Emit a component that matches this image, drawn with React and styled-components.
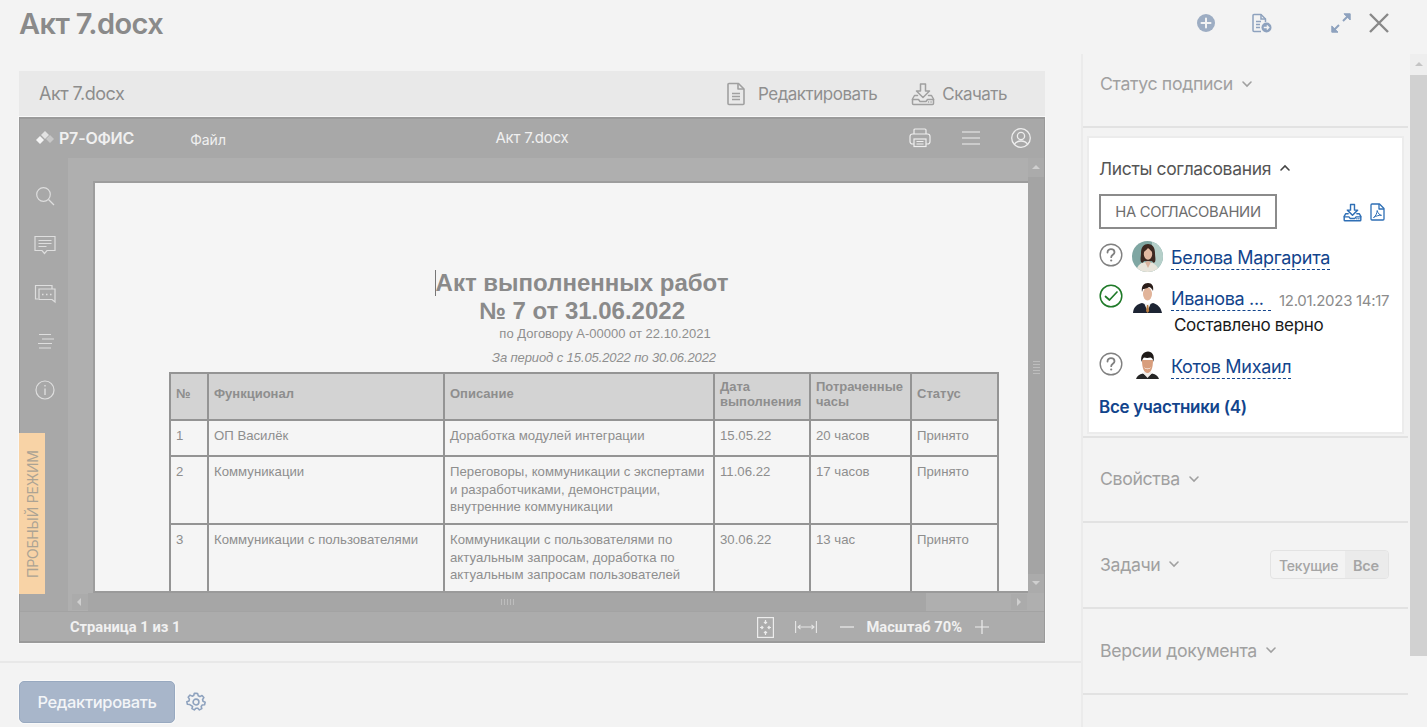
import React from "react";
import styled, { createGlobalStyle } from "styled-components";

const Global = createGlobalStyle`
  html, body { margin: 0; padding: 0; height: 100%; overflow: hidden; background: #f3f3f3; }
  #root { height: 100%; }
  * { box-sizing: border-box; }
  body { font-family: Inter, "Noto Sans", sans-serif; }
`;

const Page = styled.div`
  width: 1427px;
  height: 727px;
  background: #f3f3f3;
  display: grid;
  grid-template-columns: 1081px 346px;
  grid-template-rows: 54px 1fr;
  overflow: hidden;
`;
const TopBar = styled.header`
  grid-column: 1 / 3;
  display: flex;
  align-items: center;
  padding: 0 38px 8px 19px;
`;
const Title = styled.h1`
  margin: 0;
  font-size: 29px;
  font-weight: 600;
  color: #8a8a8a;
  letter-spacing: -0.6px;
  flex: 1;
`;
const TopIcons = styled.div`
  display: flex;
  align-items: center;
`;
const TopIcon = styled.span`
  display: flex;
  margin-left: ${(p) => p.$gap}px;
  color: ${(p) => p.$color};
`;

const Left = styled.main`
  display: flex;
  flex-direction: column;
  min-height: 0;
`;
const Work = styled.div`
  padding: 17px 36px 0 19px;
  height: 609px;
  border-bottom: 2px solid #e8e8e8;
`;
const DocHead = styled.div`
  height: 45px;
  background: #e9e9e9;
  display: flex;
  align-items: center;
  padding: 0 38px 0 20px;
  font-size: 18px;
  color: #8d8d8d;
  letter-spacing: -0.5px;
`;
const DocName = styled.span`
  flex: 1;
`;
const DocAction = styled.span`
  display: flex;
  align-items: center;
  gap: ${(p) => p.$gap}px;
  margin-left: ${(p) => p.$ml}px;
  font-size: 17px;
  color: #8f8f8f;
  letter-spacing: -0.5px;
`;
const Viewer = styled.div`
  position: relative;
  margin-top: 1px;
  height: 526px;
  background: #a8a8a8;
  border: 1px solid #9a9a9a;
  border-width: 2px 1px;
  display: flex;
  flex-direction: column;
  color: #f0f0f0;
  box-shadow: 0 0 0 1px #f8f8f8;
`;
const ViewerBar = styled.div`
  height: 39px;
  flex: none;
  display: grid;
  grid-template-columns: 1fr auto 1fr;
  align-items: center;
  padding: 0 13px 2px 15px;
  font-size: 14.5px;
`;
const BarLeft = styled.div`
  display: flex;
  align-items: center;
`;
const Brand = styled.span`
  margin-left: 4px;
  font-weight: 600;
  font-size: 16px;
  letter-spacing: -0.2px;
`;
const FileMenu = styled.span`
  margin-left: 56px;
  font-size: 14px;
  position: relative;
  top: 2px;
`;
const DocTitle = styled.span`
  font-size: 15px;
  letter-spacing: -0.2px;
  margin-left: -2px;
`;
const BarRight = styled.div`
  display: flex;
  justify-content: flex-end;
  align-items: center;
  gap: 31px;
`;
const ViewerBody = styled.div`
  flex: 1;
  display: flex;
  min-height: 0;
`;
const Rail = styled.div`
  width: 48px;
  flex: none;
  display: flex;
  flex-direction: column;
  align-items: center;
  padding: 28px 0 0 2px;
  gap: 29px;
`;
const Canvas = styled.div`
  flex: 1;
  min-width: 0;
  background: #afafaf;
  display: grid;
  grid-template-columns: minmax(0, 1fr) 16px;
  grid-template-rows: minmax(0, 1fr) 18px;
`;
const Sheet = styled.div`
  margin: 23px 0 0 25px;
  background: #f5f5f5;
  border: 1px solid #9d9d9d;
  border-width: 2px 0 2px 2px;
  border-bottom-color: #9a9a9a;
  overflow: hidden;
  color: #8a8a8a;
  font-family: "Liberation Sans", Arial, sans-serif;
  display: flex;
  flex-direction: column;
  align-items: center;
  padding: 86px 0 0 42px;
`;
const DocHeading = styled.div`
  font-size: 24px;
  line-height: 27.5px;
  font-weight: 700;
  text-align: center;
  color: #8a8a8a;
  position: relative;
  margin-right: 1px;
`;
const Caret = styled.span`
  position: absolute;
  left: -1px;
  top: 1px;
  width: 1.5px;
  height: 26px;
  background: #777;
`;
const SubLine = styled.div`
  font-size: 13px;
  line-height: 16px;
  margin-top: ${(p) => p.$mt}px;
  margin-left: ${(p) => p.$ml}px;
  font-style: ${(p) => (p.$italic ? "italic" : "normal")};
  color: #8f8f8f;
  letter-spacing: ${(p) => (p.$italic ? "-0.1px" : "0")};
`;
const DocTable = styled.table`
  margin-top: 6px;
  margin-left: 3px;
  width: 828px;
  flex: none;
  table-layout: fixed;
  border-collapse: collapse;
  font-size: 13.2px;
  line-height: 17.7px;
  color: #8e8e8e;
`;
const Th = styled.th`
  background: #d3d3d3;
  border: 2px solid #949494;
  padding: 0 5px 6px;
  height: 47px;
  text-align: left;
  font-weight: 700;
  font-size: 13px;
  line-height: 15px;
  color: #8e8e8e;
  vertical-align: middle;
`;
const Td = styled.td`
  border: 2px solid #949494;
  padding: 6px 5px 4px 5px;
  height: ${(p) => p.$h}px;
  vertical-align: top;
`;
const Cell = styled.div`
  white-space: nowrap;
`;
const ScrollV = styled.div`
  display: flex;
  flex-direction: column;
  background: #a4a4a4;
  min-height: 0;
`;
const ScrollBtn = styled.div`
  width: ${(p) => (p.$w ? p.$w + "px" : "100%")};
  height: ${(p) => (p.$h ? p.$h + "px" : "auto")};
  margin-left: ${(p) => p.$ml || 0}px;
  flex: none;
  display: flex;
  align-items: center;
  justify-content: center;
  background: #ababab;
`;
const GripV = styled.div`
  flex: 1;
  display: flex;
  align-items: center;
  justify-content: center;
  padding-bottom: 2px;
`;
const GripLinesV = styled.div`
  width: 7px;
  height: 13px;
  margin-bottom: 14px;
  background: repeating-linear-gradient(180deg, #bdbdbd 0 1px, transparent 1px 3px);
`;
const ScrollH = styled.div`
  grid-column: 1 / 3;
  display: flex;
  align-items: center;
  background: #afafaf;
  padding-left: 4px;
  min-width: 0;
`;
const HTrack = styled.div`
  width: 838px;
  height: 18px;
  flex: none;
  background: #a6a6a6;
  display: flex;
  align-items: center;
  justify-content: center;
`;
const GripLinesH = styled.div`
  width: 13px;
  height: 6px;
  background: repeating-linear-gradient(90deg, #bdbdbd 0 1px, transparent 1px 3px);
`;
const StatusBar = styled.div`
  height: 30px;
  flex: none;
  display: flex;
  align-items: center;
  padding: 1px 55px 0 50px;
  border-top: 1px solid #a3a3a3;
  background: #acacac;
  font-size: 14.7px;
  font-weight: 700;
  font-family: Roboto, Inter, sans-serif;
  color: #f1f1f1;
`;
const StatusText = styled.span`
  flex: 1;
`;
const StatusIcon = styled.span`
  display: flex;
  margin-left: ${(p) => p.$ml}px;
`;
const Zoom = styled.span`
  margin-left: 13px;
  margin-right: 13px;
`;
const TrialTab = styled.div`
  position: absolute;
  left: -1px;
  top: 314px;
  width: 26px;
  height: 161px;
  background: #f8d3a6;
  color: #aca394;
  font-size: 14px;
  display: flex;
  align-items: center;
  justify-content: center;
  writing-mode: vertical-rl;
  transform: rotate(180deg);
  letter-spacing: -0.2px;
  padding-bottom: 2px;
`;

const Footer = styled.div`
  flex: 1;
  display: flex;
  align-items: center;
  gap: 11px;
  padding: 14px 0 0 19px;
`;
const EditButton = styled.button`
  width: 156px;
  height: 42px;
  border: 1px solid #98a9c0;
  border-radius: 5px;
  background: #a8b6ca;
  color: #f3f5f8;
  font: 500 16.5px Inter, sans-serif;
  letter-spacing: -0.35px;
  box-shadow: 0 0 0 1px #f9f9f9;
`;

const Side = styled.aside`
  display: flex;
  min-height: 0;
`;
const SideCol = styled.div`
  flex: 1;
  min-width: 0;
  border-left: 2px solid #ebebeb;
  display: flex;
  flex-direction: column;
  margin-right: 2px;
`;
const Section = styled.section`
  height: ${(p) => p.$h}px;
  flex: none;
  padding: ${(p) => p.$pt ?? 0}px 19px ${(p) => (p.$pt ? 0 : 2)}px 17px;
  display: flex;
  align-items: ${(p) => (p.$top ? "flex-start" : "center")};
  border-bottom: 2px solid #e2e2e2;
`;
const SectionTitle = styled.span`
  flex: 1;
  display: flex;
  align-items: center;
  gap: 8px;
  font-size: 17.7px;
  color: #a0a0a0;
  letter-spacing: -0.35px;
`;
const Segment = styled.div`
  display: flex;
  height: 29px;
  border: 1px solid #e3e3e3;
  border-radius: 4px;
  overflow: hidden;
  font-size: 14px;
  font-weight: 500;
  color: #a5a5a5;
  letter-spacing: -0.2px;
`;
const SegItem = styled.span`
  display: flex;
  align-items: center;
  padding: 2px 0 0 8px;
  width: ${(p) => p.$w}px;
  background: ${(p) => (p.$active ? "#ebebeb" : "transparent")};
  font-weight: ${(p) => (p.$active ? 600 : 500)};
  font-size: ${(p) => (p.$active ? 14.5 : 14)}px;
`;
const CardWrap = styled.div`
  height: 310px;
  flex: none;
  padding: 10px 6px 6px 6px;
  border-bottom: 2px solid #e2e2e2;
`;
const Card = styled.div`
  height: 294px;
  background: #fff;
  box-shadow: 0 0 0 2px #ececec;
  padding: 18px 11px 0 10px;
`;
const CardTitle = styled.div`
  display: flex;
  align-items: center;
  gap: 8px;
  font-size: 17.5px;
  height: 24px;
  color: #555;
  letter-spacing: -0.35px;
`;
const StateRow = styled.div`
  display: flex;
  align-items: center;
  margin-top: 14px;
`;
const StateBadge = styled.div`
  width: 178px;
  height: 35px;
  border: 2px solid #8b8b8b;
  font-size: 14.8px;
  letter-spacing: -0.3px;
  color: #6e6e6e;
  display: flex;
  align-items: center;
  justify-content: center;
`;
const StateIcons = styled.div`
  margin-left: auto;
  margin-right: 6px;
  display: flex;
  align-items: center;
  gap: 8px;
  color: #2f6fb5;
  padding-top: 1px;
`;
const Person = styled.div`
  display: grid;
  grid-template-columns: 25px 31px auto auto;
  grid-auto-rows: min-content;
  justify-content: start;
  column-gap: 8px;
  align-items: start;
  margin-top: ${(p) => p.$mt}px;
  height: ${(p) => p.$h}px;
`;
const StatusMark = styled.span`
  display: flex;
  margin-top: 2px;
`;
const Name = styled.a`
  font-size: 18px;
  line-height: 23px;
  margin-top: 5px;
  color: #12448c;
  letter-spacing: -0.32px;
  border-bottom: 1.5px dashed #12448c;
  white-space: nowrap;
  width: ${(p) => (p.$w ? p.$w + "px" : "auto")};
`;
const When = styled.span`
  font-size: 15px;
  color: #8c8c8c;
  letter-spacing: -0.3px;
  margin-top: 9px;
  white-space: nowrap;
`;
const Comment = styled.div`
  grid-column: 3 / 5;
  grid-row: 2;
  font-size: 17px;
  line-height: 24px;
  margin: 0 0 0 3px;
  color: #1a1a1a;
  letter-spacing: -0.3px;
`;
const AllLink = styled.a`
  display: block;
  margin-top: 13px;
  font-size: 17px;
  font-weight: 600;
  color: #12448c;
  letter-spacing: -0.3px;
`;
const SideScroll = styled.div`
  width: 17px;
  flex: none;
  display: flex;
  flex-direction: column;
`;
const SideBtn = styled.div`
  height: 21px;
  background: #eeeeee;
  display: flex;
  align-items: center;
  justify-content: center;
`;
const SideThumb = styled.div`
  height: 581px;
  background: #d1d1d1;
`;

const Chevron = ({ up, color = "#a0a0a0" }) => (
  <svg width="12" height="8" viewBox="0 0 12 8" fill="none" stroke={color} strokeWidth="1.6" strokeLinecap="round">
    <path d={up ? "M2 6l4-4 4 4" : "M2 2l4 4 4-4"} />
  </svg>
);
const Tri = ({ dir, color = "#cfcfcf" }) => {
  const d = { up: "M1 6l4-4 4 4z", down: "M1 2l4 4 4-4z", left: "M6 1L2 5l4 4z", right: "M3 1l4 4-4 4z" }[dir];
  return (
    <svg width="10" height="10" viewBox="0 0 10 10" fill={color}>
      <path d={d} />
    </svg>
  );
};
const DownloadTray = ({ size = 24, color = "#a0a0a0", w = 1.5 }) => (
  <svg width={size} height={size} viewBox="0 0 24 24" fill="none" stroke={color} strokeWidth={w} strokeLinejoin="round" strokeLinecap="round">
    <path d="M9.5 2h5v7h4L12 15.5 5.500 9h4z" />
    <path d="M6.500 13.500H3.500L1.500 17v4.500a1 1 0 0 0 1 1h19a1 1 0 0 0 1-1V17l-2-3.500h-3" />
    <path d="M1.500 17.500h6l1.500 2h6l1.500-2h6" />
    <path d="M17.500 20h.1M20 20h.1" />
  </svg>
);
const FileLines = () => (
  <svg width="20" height="24" viewBox="0 0 20 24" fill="none" stroke="#a0a0a0" strokeWidth="1.6" strokeLinejoin="round">
    <path d="M3 1.500h9.500L18 7v14.500a1 1 0 0 1-1 1H3a1 1 0 0 1-1-1v-19a1 1 0 0 1 1-1z" />
    <path d="M12 1.500V7h6M6 11.500h8M6 14.500h8M6 17.500h8" />
  </svg>
);
const PlusCircle = () => (
  <svg width="20" height="20" viewBox="0 0 20 20">
    <circle cx="10" cy="10" r="9" fill="#9dadc3" />
    <path d="M10 5.500v9M5.500 10h9" stroke="#f3f3f3" strokeWidth="2" strokeLinecap="round" />
  </svg>
);
const FileGo = () => (
  <svg width="21" height="20" viewBox="0 0 21 20" fill="none" stroke="#8ea2be" strokeWidth="1.5">
    <path d="M10 18.500H3a1 1 0 0 1-1-1v-15a1 1 0 0 1 1-1h7l4.500 4.500v3" strokeLinejoin="round" />
    <path d="M10 1.500V6h4.500M5 8.500h5M5 11.500h4M5 14.500h4" />
    <circle cx="15.500" cy="14.500" r="5" fill="#8ea2be" stroke="none" />
    <path d="M12.800 14.500h5M15.800 12.500l2 2-2 2" stroke="#f3f3f3" strokeWidth="1.300" />
  </svg>
);
const ExpandArrows = () => (
  <svg width="20" height="20" viewBox="0 0 20 20" fill="#8ea2be" stroke="#8ea2be">
    <path d="M12 8l5-5M3 17l5-5" fill="none" strokeWidth="2" />
    <path d="M13 .8h6.200V7z" strokeWidth="1" />
    <path d="M.8 13v6.200H7z" strokeWidth="1" />
  </svg>
);
const CloseX = () => (
  <svg width="20" height="20" viewBox="0 0 20 20" fill="none" stroke="#888" strokeWidth="2.400">
    <path d="M1 1l18 18M19 1L1 19" />
  </svg>
);
const Logo = () => (
  <svg width="20" height="14" viewBox="0 0 20 14">
    <path d="M10 0l4 4-4 4-4-4z" fill="#e2e2e2" />
    <path d="M5 5l4 4-4 4-4-4z" fill="#f4f4f4" />
    <path d="M15 4l4 4-4 4-4-4z" fill="#c8c8c8" />
  </svg>
);
const PrinterIcon = () => (
  <svg width="22" height="20" viewBox="0 0 22 20" fill="none" stroke="#eee" strokeWidth="1.200">
    <path d="M5 6V2a1 1 0 0 1 1-1h10a1 1 0 0 1 1 1v4" />
    <rect x="1" y="6" width="20" height="10" rx="2.500" />
    <rect x="5" y="11" width="12" height="7.500" fill="#a8a8a8" />
    <path d="M7.500 13.500h7M7.500 16h7" />
  </svg>
);
const BurgerIcon = () => (
  <svg width="18" height="14" viewBox="0 0 18 14" stroke="#eee" strokeWidth="1.200">
    <path d="M0 1h18M0 7h18M0 13h18" />
  </svg>
);
const UserCircle = () => (
  <svg width="20" height="20" viewBox="0 0 20 20" fill="none" stroke="#eee" strokeWidth="1.300">
    <circle cx="10" cy="10" r="9.300" />
    <circle cx="10" cy="8" r="3.600" />
    <path d="M3.300 16.500C5 13.500 7.500 13 10 13s5 .5 6.700 3.500" />
  </svg>
);
const RailStroke = { fill: "none", stroke: "#dedede", strokeWidth: 1.200 };
const SearchIcon = () => (
  <svg width="20" height="20" viewBox="0 0 20 20" {...RailStroke}>
    <circle cx="8.500" cy="8.500" r="6.800" />
    <path d="M13.500 13.500l5.500 5.500" />
  </svg>
);
const CommentIcon = () => (
  <svg width="22" height="20" viewBox="0 0 22 20" {...RailStroke}>
    <path d="M1 1.500h20v14H13l-2.500 3-2.500-3H1z" />
    <path d="M4.500 5.500h13M4.500 8.500h13M4.500 11.500h8" />
  </svg>
);
const ChatIcon = () => (
  <svg width="22" height="20" viewBox="0 0 22 20" {...RailStroke}>
    <path d="M4 15H1.500V1.500H18V5" />
    <path d="M5 5h16v13l-3-2.500H5z" />
    <path d="M8 10.500h1.500M12 10.500h1.500M16 10.500h1.500" strokeWidth="1.600" />
  </svg>
);
const AlignIcon = () => (
  <svg width="20" height="18" viewBox="0 0 20 18" {...RailStroke}>
    <path d="M4 1.500h12M7 6h12M3 10.500h14M4 15h12" />
  </svg>
);
const InfoIcon = () => (
  <svg width="20" height="20" viewBox="0 0 20 20" {...RailStroke}>
    <circle cx="10" cy="10" r="9" />
    <path d="M10 8.500V15M10 5v1.500" strokeWidth="1.400" />
  </svg>
);
const Fit = () => (
  <svg width="17" height="21" viewBox="0 0 17 21" fill="none" stroke="#ececec" strokeWidth="1.200">
    <rect x=".6" y=".6" width="15.800" height="19.800" />
    <path d="M8.500 3v3.500M8.500 14.500V18M3 10.500h3M11 10.500h3" />
    <path d="M7 5l1.500 1.500L10 5M7 16l1.500-1.500L10 16M4.500 9l1.500 1.500L4.500 12M12.500 9L11 10.500l1.500 1.500" />
  </svg>
);
const FitWidth = () => (
  <svg width="22" height="14" viewBox="0 0 22 14" fill="none" stroke="#e6e6e6" strokeWidth="1.100">
    <path d="M.6 1v12M21.400 1v12M3 7h16M5.500 4.800L3 7l2.500 2.200M16.500 4.800L19 7l-2.500 2.200" />
  </svg>
);
const Minus = () => (
  <svg width="14" height="2" viewBox="0 0 14 2" stroke="#ececec" strokeWidth="1.200">
    <path d="M0 1h14" />
  </svg>
);
const Plus = () => (
  <svg width="14" height="14" viewBox="0 0 14 14" stroke="#ececec" strokeWidth="1.200">
    <path d="M0 7h14M7 0v14" />
  </svg>
);
const Gear = () => (
  <svg width="20" height="20" viewBox="0 0 24 24" fill="none" stroke="#8ea2be" strokeWidth="1.900" strokeLinejoin="round">
    <path d="M12 2l2 .3.700 2.700 2 .9 2.500-1.300 2.200 2.500-1.500 2.300.5 2.200 2.600 1-.7 3.100-2.800.2-1.300 1.800.8 2.700-2.900 1.500-1.900-2.100-2.300.1-1.900 2-2.900-1.500.8-2.700L4.500 15.500l-2.800-.3L1 12.200l2.600-1 .5-2.200L2.600 6.600l2.200-2.500L7.300 5.400l2-.9L10 2z" transform="translate(0 -.4)" />
    <circle cx="12" cy="12" r="3.500" />
  </svg>
);
const PdfIcon = () => (
  <svg width="15" height="18" viewBox="0 0 15 18" fill="none" stroke="#2f6fb5" strokeWidth="1.300" strokeLinejoin="round">
    <path d="M2 1h7.500L14 5.500V16a1 1 0 0 1-1 1H2a1 1 0 0 1-1-1V2a1 1 0 0 1 1-1z" />
    <path d="M9 1v5h5" />
    <path d="M3.500 14.500c2-1 3.500-4 3.700-7 .8 3 2.300 4.500 4.300 4.800-2.500-.2-5.500.6-8 2.200z" strokeWidth="1" />
  </svg>
);
const Question = () => (
  <svg width="24" height="24" viewBox="0 0 24 24" fill="none" stroke="#808080">
    <circle cx="12" cy="12" r="10.800" strokeWidth="1.400" />
    <path d="M8.500 9.500c0-2.200 1.600-3.300 3.500-3.300s3.500 1.100 3.500 3c0 2.500-3.300 2.500-3.300 5" strokeWidth="1.800" strokeLinecap="round" />
    <circle cx="12.200" cy="17.500" r="1.100" fill="#808080" stroke="none" />
  </svg>
);
const CheckCircle = () => (
  <svg width="24" height="24" viewBox="0 0 24 24" fill="none" stroke="#1f7a28">
    <circle cx="12" cy="12" r="10.800" strokeWidth="1.500" />
    <path d="M6.500 12.500l4 3.500L18 8" strokeWidth="1.700" strokeLinecap="round" strokeLinejoin="round" />
  </svg>
);
const AvatarWoman = () => (
  <svg width="31" height="31" viewBox="0 0 31 31">
    <defs>
      <clipPath id="av1"><circle cx="15.500" cy="15.500" r="15.500" /></clipPath>
    </defs>
    <g clipPath="url(#av1)">
      <rect width="31" height="31" fill="#7fa6a2" />
      <rect x="20" width="11" height="31" fill="#b5cfc9" />
      <path d="M4 31c1-7 5-10 11-10s11 3 12 10z" fill="#e8e4da" />
      <path d="M13 21l3 6 3-6-3-1z" fill="#d9b29d" />
      <path d="M9 12c0-6 3-9 7-9s7 3 7 9c0 4 1 6 0 9-2 2-3-1-3-1h-8s-1 3-3 1c-1-3 0-5 0-9z" fill="#3c2720" />
      <ellipse cx="16" cy="13" rx="4.200" ry="5.800" fill="#e3b9a2" />
      <path d="M11.500 11c2-1 4-3 4.500-5 1 2 3 4 4.500 5 0-5-2-7-4.500-7s-4.500 2-4.500 7z" fill="#3c2720" />
    </g>
  </svg>
);
const AvatarMan = () => (
  <svg width="31" height="31" viewBox="0 0 31 31">
    <path d="M1 31c.5-6 4-9 9-10l5.500 2 5.500-2c4 1 8 4 9 10z" fill="#1d2433" />
    <path d="M12 21l3.500 8 3.500-8-3.500 1z" fill="#f2f2f2" />
    <path d="M15 23l1.200 0 1 6-1.700 2-1.500-2z" fill="#b77b3e" />
    <ellipse cx="15.500" cy="12" rx="4.500" ry="6.500" fill="#e1b49a" />
    <path d="M10 10c-1-6 2-9 6-9s6 3 5 8c-1-2-2-3.500-4-4-2 1.500-5 2-6 2-.5 1-.5 2-1 3z" fill="#2b1e1a" />
  </svg>
);
const AvatarMan2 = () => (
  <svg width="31" height="31" viewBox="0 0 31 31">
    <path d="M4 29c1-3 3-4.500 7-5.500l4.500 3 4.500-3c4 1 6 2.500 7 5.500z" fill="#262626" />
    <path d="M11 23l4.500 5 4.500-5-2-2h-5z" fill="#f1ece8" />
    <path d="M10 10c0 8 2 13 5.500 13S21 18 21 10z" fill="#d89e7d" />
    <path d="M12 17c2 2 5 2 7 0-1 3-6 3-7 0z" fill="#fff" />
    <path d="M9.500 12C8 5 12 1.500 16 1.500S23 5 21.500 12c-.5-3-1.500-4-3-4.500-2 .5-4.500.5-6.500 0-1 1-2 2.500-2.500 4.500z" fill="#1f1a18" />
  </svg>
);

const rows = [
  { h: 36, n: "1", f: ["ОП Василёк"], d: ["Доработка модулей интеграции"], date: "15.05.22", hrs: "20 часов" },
  { h: 68, n: "2", f: ["Коммуникации"], d: ["Переговоры, коммуникации с экспертами", "и разработчиками, демонстрации,", "внутренние коммуникации"], date: "11.06.22", hrs: "17 часов" },
  { h: 72, n: "3", f: ["Коммуникации с пользователями"], d: ["Коммуникации с пользователями по", "актуальным запросам, доработка по", "актуальным запросам пользователей"], date: "30.06.22", hrs: "13 час" },
];

export default function App() {
  return (
    <Page>
      <Global />
      <TopBar>
        <Title>Акт 7.docx</Title>
        <TopIcons>
          <TopIcon $gap={0}><PlusCircle /></TopIcon>
          <TopIcon $gap={35}><FileGo /></TopIcon>
          <TopIcon $gap={59}><ExpandArrows /></TopIcon>
          <TopIcon $gap={18}><CloseX /></TopIcon>
        </TopIcons>
      </TopBar>
      <Left>
        <Work>
          <DocHead>
            <DocName>Акт 7.docx</DocName>
            <DocAction $gap={12} $ml={0}><FileLines />Редактировать</DocAction>
            <DocAction $gap={7} $ml={34}><DownloadTray />Скачать</DocAction>
          </DocHead>
          <Viewer>
            <ViewerBar>
              <BarLeft>
                <Logo />
                <Brand>Р7-ОФИС</Brand>
                <FileMenu>Файл</FileMenu>
              </BarLeft>
              <DocTitle>Акт 7.docx</DocTitle>
              <BarRight>
                <PrinterIcon />
                <BurgerIcon />
                <UserCircle />
              </BarRight>
            </ViewerBar>
            <ViewerBody>
              <Rail>
                <SearchIcon />
                <CommentIcon />
                <ChatIcon />
                <AlignIcon />
                <InfoIcon />
              </Rail>
              <Canvas>
                <Sheet>
                  <DocHeading>
                    <Caret />
                    Акт выполненных работ
                    <br />№ 7 от 31.06.2022
                  </DocHeading>
                  <SubLine $mt={2} $ml={45}>по Договору А-00000 от 22.10.2021</SubLine>
                  <SubLine $mt={8} $ml={43} $italic>За период с 15.05.2022 по 30.06.2022</SubLine>
                  <DocTable>
                    <colgroup>
                      <col width="38" />
                      <col width="236" />
                      <col width="270" />
                      <col width="96" />
                      <col width="101" />
                      <col width="87" />
                    </colgroup>
                    <thead>
                      <tr>
                        <Th>№</Th>
                        <Th>Функционал</Th>
                        <Th>Описание</Th>
                        <Th>Дата выполнения</Th>
                        <Th>Потраченные часы</Th>
                        <Th>Статус</Th>
                      </tr>
                    </thead>
                    <tbody>
                      {rows.map((r) => (
                        <tr key={r.n}>
                          <Td $h={r.h}>{r.n}</Td>
                          <Td $h={r.h}>{r.f.map((t) => <Cell key={t}>{t}</Cell>)}</Td>
                          <Td $h={r.h}>{r.d.map((t) => <Cell key={t}>{t}</Cell>)}</Td>
                          <Td $h={r.h}>{r.date}</Td>
                          <Td $h={r.h}>{r.hrs}</Td>
                          <Td $h={r.h}>Принято</Td>
                        </tr>
                      ))}
                    </tbody>
                  </DocTable>
                </Sheet>
                <ScrollV>
                  <ScrollBtn $h={19}><Tri dir="up" /></ScrollBtn>
                  <GripV><GripLinesV /></GripV>
                  <ScrollBtn $h={19}><Tri dir="down" /></ScrollBtn>
                </ScrollV>
                <ScrollH>
                  <ScrollBtn $w={16} $h={16}><Tri dir="left" /></ScrollBtn>
                  <HTrack><GripLinesH /></HTrack>
                  <ScrollBtn $w={16} $h={16} $ml={85}><Tri dir="right" /></ScrollBtn>
                </ScrollH>
              </Canvas>
            </ViewerBody>
            <StatusBar>
              <StatusText>Страница 1 из 1</StatusText>
              <StatusIcon $ml={0}><Fit /></StatusIcon>
              <StatusIcon $ml={21}><FitWidth /></StatusIcon>
              <StatusIcon $ml={23}><Minus /></StatusIcon>
              <Zoom>Масштаб 70%</Zoom>
              <StatusIcon $ml={0}><Plus /></StatusIcon>
            </StatusBar>
            <TrialTab>ПРОБНЫЙ РЕЖИМ</TrialTab>
          </Viewer>
        </Work>
        <Footer>
          <EditButton>Редактировать</EditButton>
          <Gear />
        </Footer>
      </Left>
      <Side>
        <SideCol>
          <Section $h={74} $top $pt={19}>
            <SectionTitle>Статус подписи <Chevron /></SectionTitle>
          </Section>
          <CardWrap>
            <Card>
              <CardTitle>Листы согласования <Chevron up color="#444" /></CardTitle>
              <StateRow>
                <StateBadge>НА СОГЛАСОВАНИИ</StateBadge>
                <StateIcons>
                  <DownloadTray size={19} color="#2f6fb5" w={1.800} />
                  <PdfIcon />
                </StateIcons>
              </StateRow>
              <Person $mt={12} $h={38}>
                <StatusMark><Question /></StatusMark>
                <AvatarWoman />
                <Name>Белова Маргарита</Name>
              </Person>
              <Person $mt={3} $h={58}>
                <StatusMark><CheckCircle /></StatusMark>
                <AvatarMan />
                <Name $w={100}>Иванова ...</Name>
                <When>12.01.2023 14:17</When>
                <Comment>Составлено верно</Comment>
              </Person>
              <Person $mt={10} $h={34}>
                <StatusMark><Question /></StatusMark>
                <AvatarMan2 />
                <Name>Котов Михаил</Name>
              </Person>
              <AllLink>Все участники (4)</AllLink>
            </Card>
          </CardWrap>
          <Section $h={85}>
            <SectionTitle>Свойства <Chevron /></SectionTitle>
          </Section>
          <Section $h={86}>
            <SectionTitle>Задачи <Chevron /></SectionTitle>
            <Segment>
              <SegItem $w={74}>Текущие</SegItem>
              <SegItem $w={43} $active>Все</SegItem>
            </Segment>
          </Section>
          <Section $h={86}>
            <SectionTitle>Версии документа <Chevron /></SectionTitle>
          </Section>
        </SideCol>
        <SideScroll>
          <SideBtn><Tri dir="up" color="#c4c4c4" /></SideBtn>
          <SideThumb />
        </SideScroll>
      </Side>
    </Page>
  );
}
